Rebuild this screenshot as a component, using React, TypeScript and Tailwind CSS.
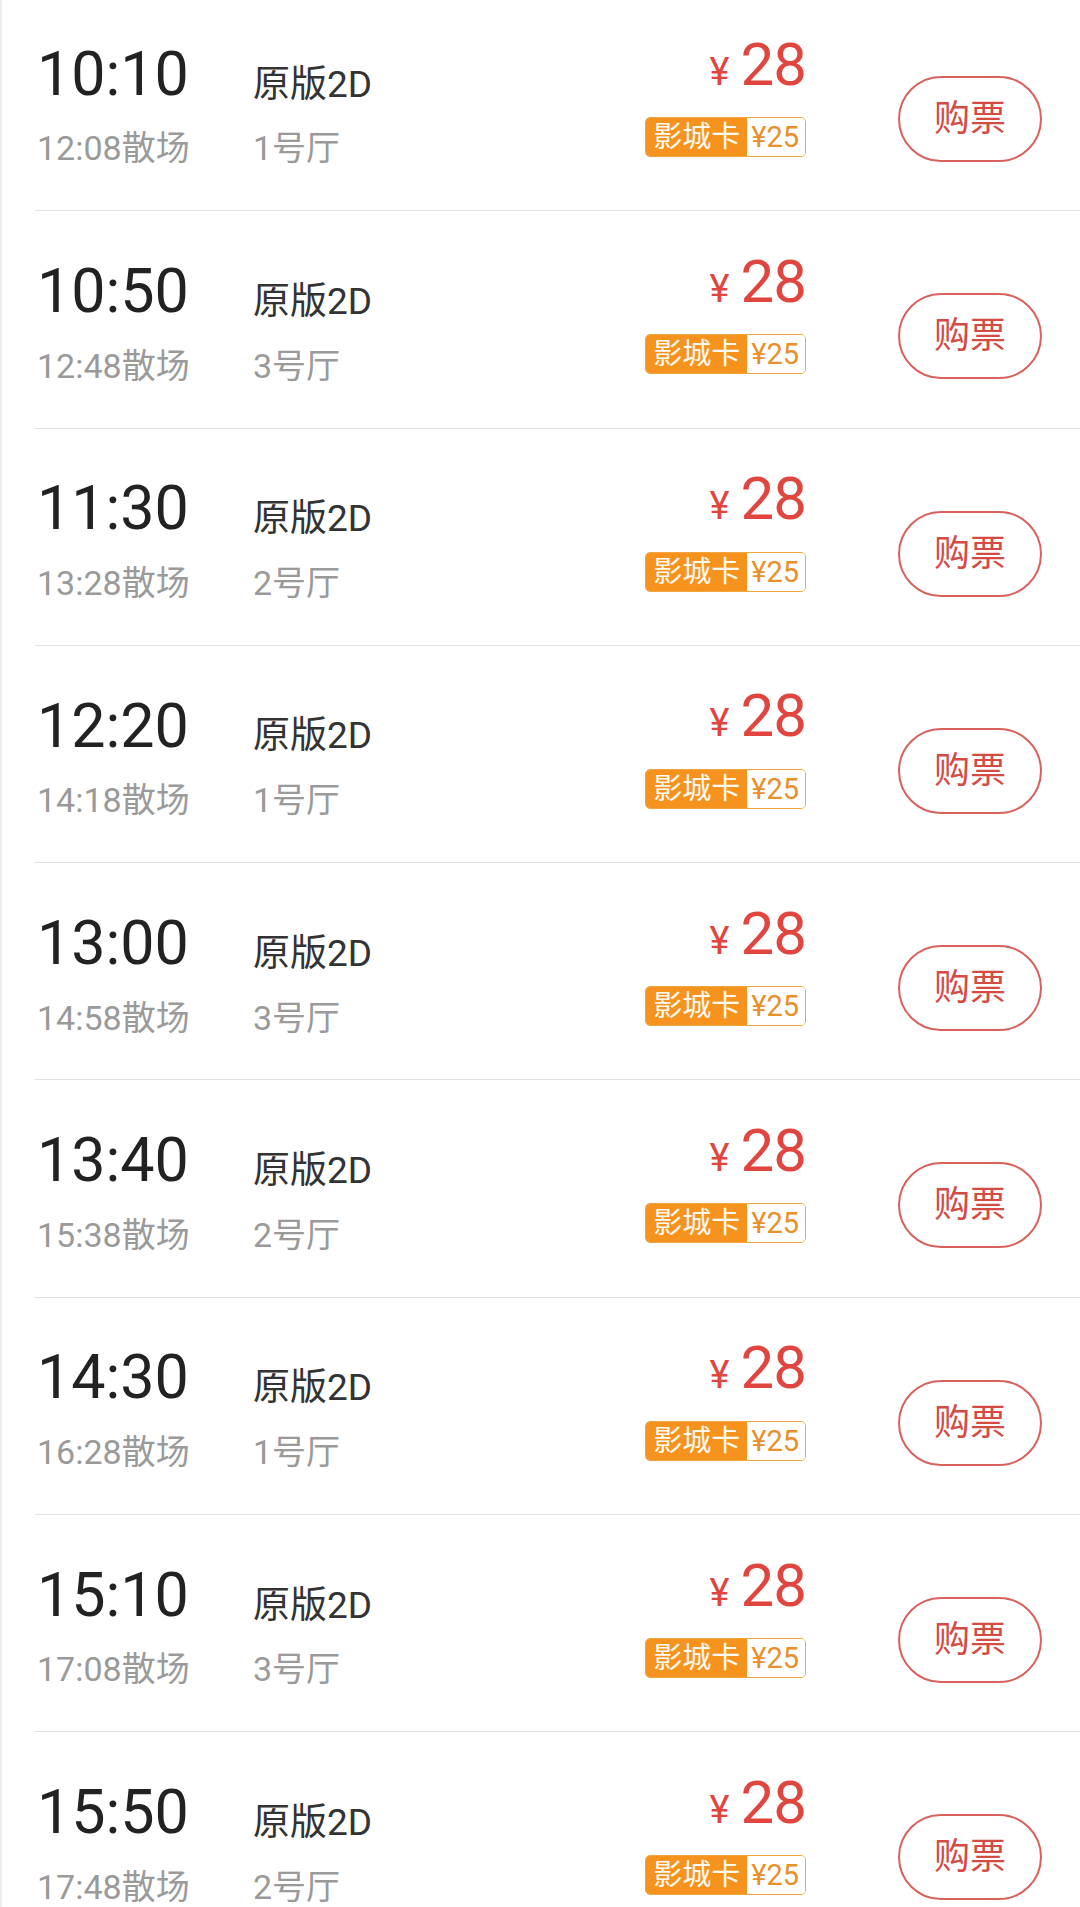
import React from "react";

const rows = [
  ["10:10", "12:08", "1号厅"],
  ["10:50", "12:48", "3号厅"],
  ["11:30", "13:28", "2号厅"],
  ["12:20", "14:18", "1号厅"],
  ["13:00", "14:58", "3号厅"],
  ["13:40", "15:38", "2号厅"],
  ["14:30", "16:28", "1号厅"],
  ["15:10", "17:08", "3号厅"],
  ["15:50", "17:48", "2号厅"],
];

function Row({ start, end, hall }: { start: string; end: string; hall: string }) {
  return (
    <div className="h-[217.3px] shrink-0 ml-[33px] pr-[38px] border-b border-[#e2e2e2] flex items-start">
      <div className="w-[218px] pl-[2px] pt-[49.7px] flex flex-col">
        <div className="text-[61px] leading-[61px] text-[#222222]">{start}</div>
        <div className="mt-[26.7px] text-[34px] leading-[34px] text-[#9a9a9a] whitespace-nowrap">
          {end}散场
        </div>
      </div>
      <div className="flex-1 pt-[71.5px] flex flex-col">
        <div className="text-[37px] leading-[37px] text-[#333333] whitespace-nowrap">原版2D</div>
        <div className="mt-[28.9px] text-[34px] leading-[34px] text-[#9a9a9a] whitespace-nowrap">{hall}</div>
      </div>
      <div className="pt-[40.5px] flex flex-col items-end">
        <div className="flex items-baseline text-[#e0463f]">
          <span className="text-[38px] leading-[38px] mr-[11px]">¥</span>
          <span className="text-[60px] leading-[60px] tracking-[-1px]">28</span>
        </div>
        <div className="mt-[22.5px] h-[40px] flex rounded-[5px] border border-[#f0a640] overflow-hidden">
          <div className="bg-[#f6921e] px-[7px] text-[29px] leading-[38px] text-[#fffaf0] whitespace-nowrap">
            影城卡
          </div>
          <div className="bg-white pl-[4px] pr-[6px] text-[29px] leading-[38px] text-[#e8902a] whitespace-nowrap">
            ¥25
          </div>
        </div>
      </div>
      <div className="ml-[92px] mt-[82px] w-[144px] h-[86px] shrink-0 rounded-full border-2 border-[#d9615b] flex items-center justify-center text-[36px] leading-[36px] text-[#d44b45]">
        购票
      </div>
    </div>
  );
}

export default function App() {
  return (
    <div className="w-[1080px] h-[1907px] overflow-hidden bg-white border-l-2 border-[#ececec] font-[Roboto,'Noto_Sans_CJK_SC',sans-serif]">
      <div className="-mt-[6px] flex flex-col">
        {rows.map(([s, e, h]) => (
          <Row key={s} start={s} end={e} hall={h} />
        ))}
      </div>
    </div>
  );
}
